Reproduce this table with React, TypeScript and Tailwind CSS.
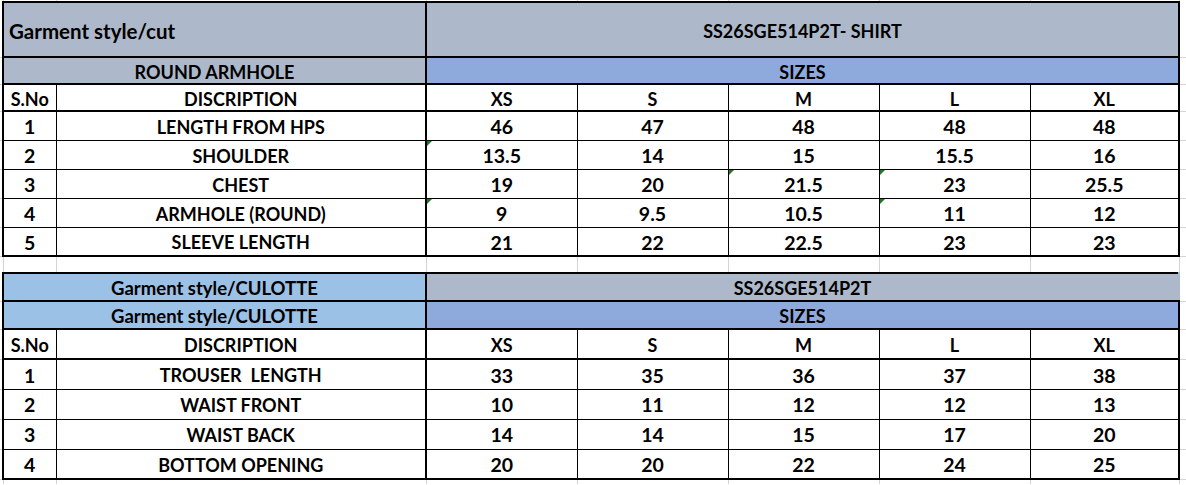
import React from "react";

const sizes = ["XS", "S", "M", "L", "XL"];

type Row = { no: number; desc: string; vals: string[]; flags: number[] };

const shirtRows: Row[] = [
  { no: 1, desc: "LENGTH FROM HPS", vals: ["46", "47", "48", "48", "48"], flags: [] },
  { no: 2, desc: "SHOULDER", vals: ["13.5", "14", "15", "15.5", "16"], flags: [0] },
  { no: 3, desc: "CHEST", vals: ["19", "20", "21.5", "23", "25.5"], flags: [2, 3] },
  { no: 4, desc: "ARMHOLE (ROUND)", vals: ["9", "9.5", "10.5", "11", "12"], flags: [0, 3] },
  { no: 5, desc: "SLEEVE LENGTH", vals: ["21", "22", "22.5", "23", "23"], flags: [] },
];

const culotteRows: Row[] = [
  { no: 1, desc: "TROUSER  LENGTH", vals: ["33", "35", "36", "37", "38"], flags: [] },
  { no: 2, desc: "WAIST FRONT", vals: ["10", "11", "12", "12", "13"], flags: [] },
  { no: 3, desc: "WAIST BACK", vals: ["14", "14", "15", "17", "20"], flags: [] },
  { no: 4, desc: "BOTTOM OPENING", vals: ["20", "20", "22", "24", "25"], flags: [] },
];

// green "number stored as text" marker, like excel
const Flag = () => (
  <span className="absolute top-0 left-0 w-0 h-0 border-t-[5px] border-r-[5px] border-t-[#1f7a1f] border-r-transparent" />
);

// the thin sheet gridlines outside of the tables
const Edge = () => <td className="p-0 border-b border-b-[#d4d4d4]" />;

const Spacer = ({ h }: { h: string }) => (
  <tr className={h}>
    <td className="p-0 border-r border-r-[#d4d4d4]" />
    <td className="p-0 border-r border-r-[#d4d4d4]" />
    <td className="p-0 border-r border-r-[#d4d4d4]" />
    {sizes.map((s) => (
      <td key={s} className="p-0 border-r border-r-[#d4d4d4]" />
    ))}
    <td className="p-0" />
  </tr>
);

const HeaderRow = ({ h }: { h: string }) => (
  <tr className={h}>
    <Edge />
    <td className="p-0 pt-[2px] text-center border-2 border-black border-r">S.No</td>
    <td className="p-0 pt-[2px] text-center border-2 border-black border-l">DISCRIPTION</td>
    {sizes.map((s, i) => (
      <td
        key={s}
        className={`p-0 pt-[2px] text-center border border-black border-b-2 border-t-2 ${i === 4 ? "border-r-2" : ""}`}
      >
        {s}
      </td>
    ))}
    <Edge />
  </tr>
);

const DataRows = ({ rows, h }: { rows: Row[]; h: string }) => (
  <>
    {rows.map((r, ri) => {
      const bottom = ri === rows.length - 1 ? "border-b-2" : "";
      return (
        <tr key={r.no} className={h}>
          <Edge />
          <td className={`p-0 pt-[2px] text-center text-[19.5px] border border-black border-l-2 ${bottom}`}>
            {r.no}
          </td>
          <td className={`p-0 pt-[2px] text-center border border-black border-r-2 ${bottom}`}>
            <span className="whitespace-pre">{r.desc}</span>
          </td>
          {r.vals.map((v, i) => (
            <td
              key={i}
              className={`relative p-0 pt-[2px] text-center text-[19.5px] border border-black ${bottom} ${i === 4 ? "border-r-2" : ""}`}
            >
              {r.flags.includes(i) && <Flag />}
              {v}
            </td>
          ))}
          <Edge />
        </tr>
      );
    })}
  </>
);

export default function App() {
  return (
    <div className="w-[1186px] h-[485px] overflow-hidden bg-white text-black font-['Lato',sans-serif] font-bold text-[18px] leading-none">
      <table className="table-fixed border-collapse w-[1186px]">
        <colgroup>
          <col className="w-[3px]" />
          <col className="w-[53px]" />
          <col className="w-[370px]" />
          <col className="w-[151px]" />
          <col className="w-[151px]" />
          <col className="w-[151px]" />
          <col className="w-[151px]" />
          <col className="w-[149px]" />
          <col className="w-[7px]" />
        </colgroup>
        <tbody>
          <Spacer h="h-[2px]" />

          {/* shirt */}
          <tr className="h-[55px]">
            <Edge />
            <td colSpan={2} className="p-0 pt-[3px] pl-[5px] text-left text-[20.5px] bg-[#adb9ca] border-2 border-black">
              Garment style/cut
            </td>
            <td colSpan={5} className="p-0 pt-[3px] text-center bg-[#adb9ca] border-2 border-black">
              SS26SGE514P2T- SHIRT
            </td>
            <Edge />
          </tr>
          <tr className="h-[27px]">
            <Edge />
            <td colSpan={2} className="p-0 pt-[2px] text-center bg-[#adb9ca] border-2 border-black">
              ROUND ARMHOLE
            </td>
            <td colSpan={5} className="p-0 pt-[2px] text-center bg-[#8ea9db] border-2 border-black">
              SIZES
            </td>
            <Edge />
          </tr>
          <HeaderRow h="h-[27px]" />
          <DataRows rows={shirtRows} h="h-[29px]" />

          <Spacer h="h-[17px]" />

          {/* culotte */}
          <tr className="h-[28px]">
            <Edge />
            <td colSpan={2} className="p-0 pt-[2px] text-center text-[18.5px] bg-[#9bc2e6] border-2 border-black">
              Garment style/CULOTTE
            </td>
            <td colSpan={5} className="p-0 pt-[2px] text-center bg-[#adb9ca] border-2 border-black border-r-[#adb9ca]">
              SS26SGE514P2T
            </td>
            <Edge />
          </tr>
          <tr className="h-[28px]">
            <Edge />
            <td colSpan={2} className="p-0 pt-[2px] text-center text-[18.5px] bg-[#9bc2e6] border-2 border-black">
              Garment style/CULOTTE
            </td>
            <td colSpan={5} className="p-0 pt-[2px] text-center bg-[#8ea9db] border-2 border-black">
              SIZES
            </td>
            <Edge />
          </tr>
          <HeaderRow h="h-[30px]" />
          <DataRows rows={culotteRows} h="h-[30px]" />
          <Spacer h="h-[5px]" />
        </tbody>
      </table>
    </div>
  );
}
